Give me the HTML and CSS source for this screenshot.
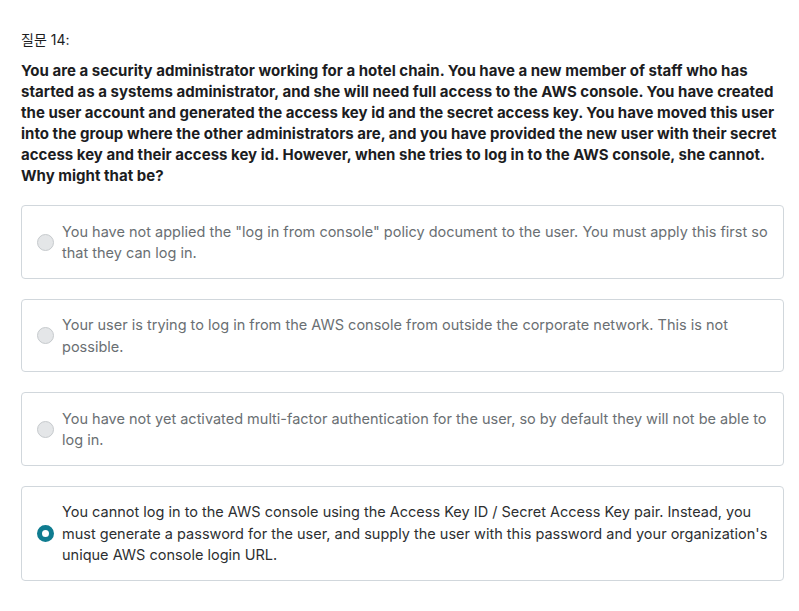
FILE: index.html
```html
<!DOCTYPE html>
<html lang="ko">
<head>
<meta charset="utf-8">
<link rel="stylesheet" href="styles.css">
</head>
<body>
<div class="quiz">
  <div class="qnum">질문 14:</div>
  <div class="prompt">You are a security administrator working for a hotel chain. You have a new member of staff who has<br>started as a systems administrator, and she will need full access to the AWS console. You have created<br>the user account and generated the access key id and the secret access key. You have moved this user<br>into the group where the other administrators are, and you have provided the new user with their secret<br>access key and their access key id. However, when she tries to log in to the AWS console, she cannot.<br>Why might that be?</div>
  <ul class="answers">
    <li class="answer"><span class="radio"></span><span class="text">You have not applied the "log in from console" policy document to the user. You must apply this first so that they can log in.</span></li>
    <li class="answer"><span class="radio"></span><span class="text">Your user is trying to log in from the AWS console from outside the corporate network. This is not possible.</span></li>
    <li class="answer"><span class="radio"></span><span class="text">You have not yet activated multi-factor authentication for the user, so by default they will not be able to log in.</span></li>
    <li class="answer selected"><span class="radio"></span><span class="text">You cannot log in to the AWS console using the Access Key ID / Secret Access Key pair. Instead, you must generate a password for the user, and supply the user with this password and your organization's unique AWS console login URL.</span></li>
  </ul>
</div>
</body>
</html>
```

FILE: styles.css
```css
html, body {
  margin: 0;
  padding: 0;
  background: #ffffff;
}
body {
  font-family: "Inter", "Noto Sans CJK KR", sans-serif;
  color: #1c1d1f;
}
.quiz {
  padding: 30px 15px 0 21px;
}
.qnum {
  font-size: 14px;
  line-height: 20px;
  color: #1c1d1f;
  margin-bottom: 10px;
}
.prompt {
  font-size: 15px;
  font-weight: 700;
  line-height: 21px;
  letter-spacing: 0.02px;
  white-space: nowrap;
  margin-bottom: 19px;
}
.answers {
  list-style: none;
  margin: 0;
  padding: 0;
  display: flex;
  flex-direction: column;
  gap: 20px;
}
.answer {
  display: flex;
  align-items: center;
  gap: 8px;
  border: 1px solid #d1d7dc;
  border-radius: 4px;
  padding: 14.5px 15px 14px 15px;
}
.radio {
  flex: none;
  width: 15px;
  height: 15px;
  border-radius: 50%;
  background: #e4e6e8;
  border: 1px solid #c6cacd;
}
.text {
  font-size: 14.5px;
  line-height: 21.5px;
  color: #6a6f73;
  letter-spacing: 0;
}
.selected .text {
  color: #2d2f31;
}
.selected .radio {
  background: #ffffff;
  border: 5px solid #0f7c90;
  width: 7px;
  height: 7px;
}
```
